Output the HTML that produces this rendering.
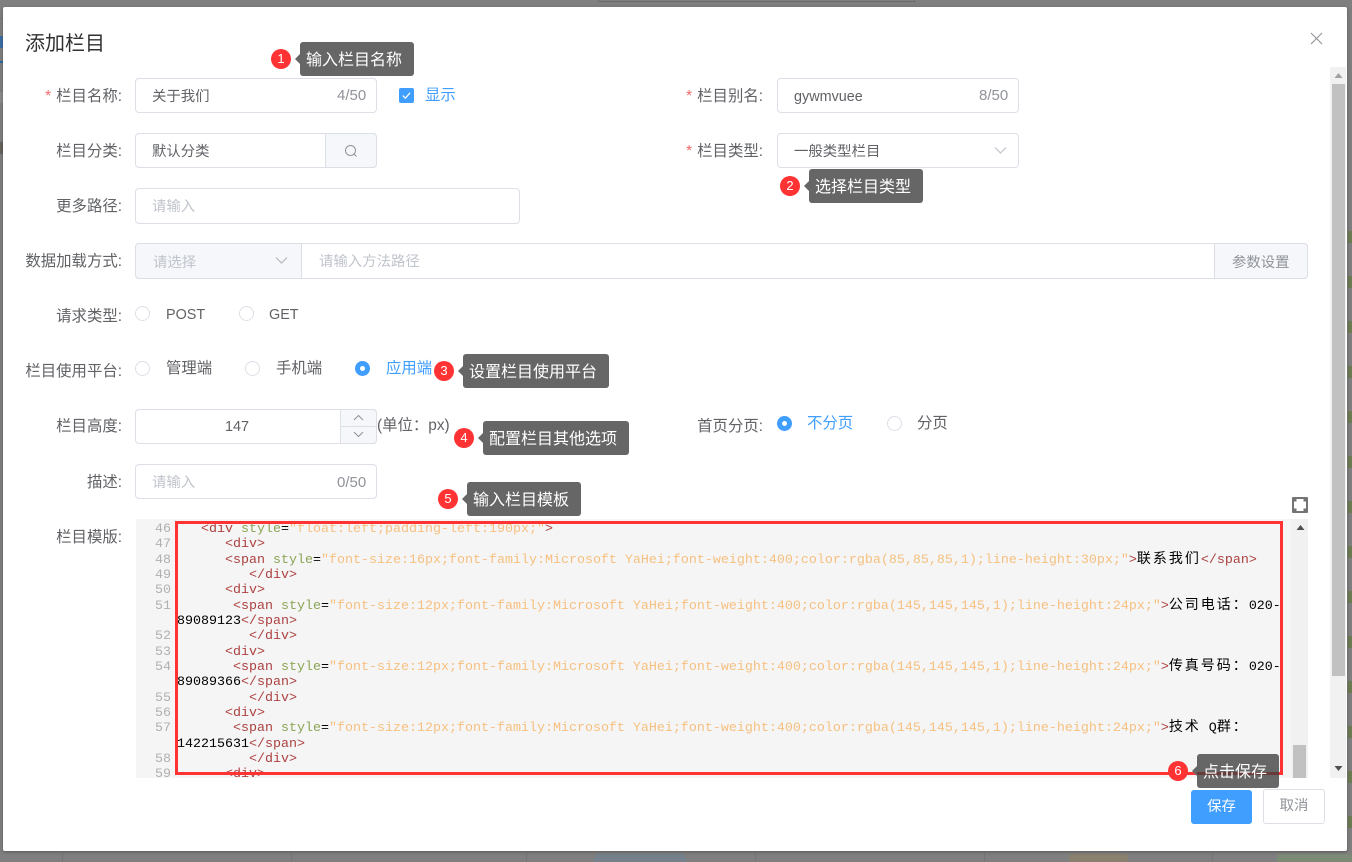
<!DOCTYPE html>
<html lang="zh"><head><meta charset="utf-8"><title>添加栏目</title>
<style>
html,body{margin:0;padding:0}
body{width:1352px;height:862px;overflow:hidden;position:relative;background:#7f7f7f;font-family:"Liberation Sans","Noto Sans CJK SC",sans-serif;font-size:14.4px;color:#606266}
.a{position:absolute;box-sizing:border-box}
.t{position:absolute;white-space:nowrap;line-height:20px;height:20px;margin-top:1px}
.l{text-align:right;width:120px;left:2px;font-size:15.4px}
.w{font-size:15.4px}
.box{position:absolute;box-sizing:border-box;background:#fff;border:1px solid #dcdfe6;border-radius:4px}
.ph{color:#c0c4cc}
.cnt{color:#909399;font-size:15px}
.req{color:#f56c6c;margin-right:5px}
.r{position:absolute;box-sizing:border-box;width:15px;height:15px;border-radius:50%;border:1px solid #dcdfe6;background:#fff}
.r.on{background:#409eff;border-color:#409eff}
.r.on:after{content:"";position:absolute;left:4px;top:4px;width:5px;height:5px;background:#fff;border-radius:50%}
.blue{color:#409eff}
.tip{position:absolute;box-sizing:border-box;height:34px;background:#666;color:#fff;font-size:16px;line-height:37px;border-radius:3px;padding-left:6px;white-space:nowrap}
.tip:before{content:"";position:absolute;left:-5px;top:12px;border:5px solid transparent;border-left:0;border-right-color:#666}
.n{position:absolute;width:20px;height:20px;margin:-10px 0 0 -10px;border-radius:50%;background:#f33;color:#fff;font-size:13px;line-height:20px;text-align:center}
#code{position:absolute;left:136px;top:519px;width:1155px;height:259px;overflow:hidden;background:#f5f5f5}
.ln{position:absolute;left:0;margin-top:1.7px;height:15.35px;line-height:15.35px;white-space:pre;font-family:"Liberation Mono","Noto Sans CJK SC",monospace;font-size:13.33px;color:#000}
.num{color:#b0b0b0;width:35px;text-align:right}
.c{left:41px}
.g{color:#ad4040}.v{color:#8ba556}.s{color:#f6c080}
.z{font-family:"Noto Sans CJK SC",sans-serif;font-size:14px;letter-spacing:2px;line-height:0}
.bgl{position:absolute;background:#757575}
.gr{position:absolute;left:1348px;width:4px;height:12px;background:#6d7b52}
</style></head><body>

<div class="bgl" style="left:0;top:18px;width:3px;height:1px"></div>
<div class="a" style="left:0;top:36px;width:3px;height:12px;background:#3b6ea5"></div>
<div class="a" style="left:0;top:61px;width:3px;height:2px;background:#2b68a8"></div>
<div class="a" style="left:0;top:92px;width:3px;height:11px;background:#8a8a8a"></div>
<div class="a" style="left:0;top:142px;width:3px;height:12px;background:#66625c"></div>
<div class="a" style="left:598px;top:0;width:317px;height:2px;border:1px solid #6c6c6c;border-top:0"></div>
<div class="bgl" style="left:62px;top:852px;width:1px;height:10px"></div>
<div class="bgl" style="left:291px;top:852px;width:1px;height:10px"></div>
<div class="bgl" style="left:526px;top:852px;width:1px;height:10px"></div>
<div class="bgl" style="left:755px;top:852px;width:1px;height:10px"></div>
<div class="bgl" style="left:984px;top:852px;width:1px;height:10px"></div>
<div class="bgl" style="left:1212px;top:852px;width:1px;height:10px"></div>
<div class="a" style="left:594px;top:854px;width:92px;height:8px;background:#75808a;border-radius:3px 3px 0 0"></div>
<div class="a" style="left:1069px;top:854px;width:59px;height:8px;background:#8a8070;border-radius:3px 3px 0 0"></div>
<div class="a" style="left:1277px;top:854px;width:75px;height:8px;background:#7c8a76;border-radius:3px 3px 0 0"></div>
<div class="gr" style="top:231px"></div><div class="gr" style="top:276px"></div><div class="gr" style="top:321px"></div><div class="gr" style="top:366px"></div><div class="gr" style="top:411px"></div><div class="gr" style="top:456px"></div><div class="gr" style="top:501px"></div><div class="gr" style="top:546px"></div><div class="gr" style="top:591px"></div><div class="gr" style="top:636px"></div><div class="gr" style="top:681px"></div><div class="gr" style="top:726px"></div><div class="gr" style="top:771px"></div><div class="gr" style="top:816px"></div>

<!-- modal -->
<div class="a" style="left:3px;top:7px;width:1344px;height:844px;background:#fff;border-radius:2px;box-shadow:0 1px 3px rgba(0,0,0,.3)"></div>
<div class="t" style="left:25px;top:30px;font-size:20px;line-height:26px;height:26px;color:#303133">添加栏目</div>
<svg class="a" style="left:1310px;top:32px" width="13" height="13" viewBox="0 0 13 13"><path d="M1 1L12 12M12 1L1 12" stroke="#909399" stroke-width="1.1" fill="none"/></svg>

<!-- outer scrollbar -->
<div class="a" style="left:1330px;top:67px;width:16px;height:711px;background:#f1f1f1"></div>
<div class="a" style="left:1332px;top:84px;width:13px;height:592px;background:#c1c1c1"></div>
<svg class="a" style="left:1334px;top:73px" width="9" height="6"><path d="M4.5 0L8.5 5H.5Z" fill="#a3a3a3"/></svg>
<svg class="a" style="left:1334px;top:766px" width="9" height="6"><path d="M.5 0H8.5L4.5 5Z" fill="#505050"/></svg>

<!-- row 1 -->
<div class="t l" style="top:86px"><span class="req">*</span>栏目名称:</div>
<div class="box" style="left:135px;top:78px;width:242px;height:35px"></div>
<div class="t" style="left:152px;top:86px">关于我们</div>
<div class="t cnt" style="left:337px;top:85px">4/50</div>
<div class="a" style="left:399px;top:88px;width:15px;height:15px;background:#409eff;border-radius:2px"></div>
<svg class="a" style="left:399px;top:88px" width="15" height="15"><path d="M3.8 7.6L6.4 10.2L11 4.8" stroke="#fff" stroke-width="1.2" fill="none"/></svg>
<div class="t blue w" style="left:425px;top:85px">显示</div>

<div class="t l" style="top:86px;left:643px"><span class="req">*</span>栏目别名:</div>
<div class="box" style="left:777px;top:78px;width:242px;height:35px"></div>
<div class="t" style="left:794px;top:86px">gywmvuee</div>
<div class="t cnt" style="left:979px;top:85px">8/50</div>

<!-- row 2 -->
<div class="t l" style="top:141px">栏目分类:</div>
<div class="box" style="left:135px;top:133px;width:242px;height:35px"></div>
<div class="a" style="left:325px;top:133px;width:52px;height:35px;background:#f5f7fa;border:1px solid #dcdfe6;border-radius:0 4px 4px 0"></div>
<svg class="a" style="left:344px;top:144px" width="14" height="14"><circle cx="6.5" cy="6.5" r="5" stroke="#909399" fill="none"/><path d="M10 10L12.5 12.5" stroke="#909399"/></svg>
<div class="t" style="left:152px;top:141px">默认分类</div>

<div class="t l" style="top:141px;left:643px"><span class="req">*</span>栏目类型:</div>
<div class="box" style="left:777px;top:133px;width:242px;height:35px"></div>
<div class="t" style="left:794px;top:141px">一般类型栏目</div>
<svg class="a" style="left:994px;top:146px" width="13" height="9"><path d="M1 1.5L6.5 7L12 1.5" stroke="#c0c4cc" stroke-width="1.2" fill="none"/></svg>

<!-- row 3 -->
<div class="t l" style="top:196px">更多路径:</div>
<div class="box" style="left:135px;top:188px;width:385px;height:36px"></div>
<div class="t ph" style="left:152px;top:196px">请输入</div>

<!-- row 4 -->
<div class="t l" style="top:251px">数据加载方式:</div>
<div class="box" style="left:135px;top:243px;width:1173px;height:36px"></div>
<div class="a" style="left:135px;top:243px;width:167px;height:36px;background:#f5f7fa;border:1px solid #dcdfe6;border-radius:4px 0 0 4px"></div>
<div class="t ph" style="left:153px;top:252px">请选择</div>
<svg class="a" style="left:275px;top:256px" width="13" height="9"><path d="M1 1.5L6.5 7L12 1.5" stroke="#b4b8bf" stroke-width="1.2" fill="none"/></svg>
<div class="t ph" style="left:319px;top:251px">请输入方法路径</div>
<div class="a" style="left:1214px;top:243px;width:94px;height:36px;background:#f5f7fa;border:1px solid #dcdfe6;border-radius:0 4px 4px 0"></div>
<div class="t" style="left:1232px;top:252px;color:#909399">参数设置</div>

<!-- row 5 -->
<div class="t l" style="top:306px">请求类型:</div>
<div class="r" style="left:135px;top:306px"></div><div class="t" style="left:166px;top:304px">POST</div>
<div class="r" style="left:239px;top:306px"></div><div class="t" style="left:269px;top:304px">GET</div>

<!-- row 6 -->
<div class="t l" style="top:361px">栏目使用平台:</div>
<div class="r" style="left:135px;top:361px"></div><div class="t w" style="left:166px;top:358px">管理端</div>
<div class="r" style="left:245px;top:361px"></div><div class="t w" style="left:276px;top:358px">手机端</div>
<div class="r on" style="left:355px;top:361px"></div><div class="t blue w" style="left:386px;top:358px">应用端</div>

<!-- row 7 -->
<div class="t l" style="top:416px">栏目高度:</div>
<div class="box" style="left:135px;top:409px;width:242px;height:35px"></div>
<div class="a" style="left:340px;top:409px;width:37px;height:18px;background:#f5f7fa;border:1px solid #dcdfe6;border-radius:0 4px 0 0"></div>
<div class="a" style="left:340px;top:426px;width:37px;height:18px;background:#f5f7fa;border:1px solid #dcdfe6;border-radius:0 0 4px 0"></div>
<svg class="a" style="left:353px;top:414px" width="11" height="7"><path d="M1 6L5.5 1.5L10 6" stroke="#909399" fill="none"/></svg>
<svg class="a" style="left:353px;top:431px" width="11" height="7"><path d="M1 1L5.5 5.5L10 1" stroke="#909399" fill="none"/></svg>
<div class="t" style="left:225px;top:416px">147</div>
<div class="t w" style="left:377px;top:415px">(单位：px)</div>
<div class="t l" style="top:416px;left:643px">首页分页:</div>
<div class="r on" style="left:777px;top:416px"></div><div class="t blue w" style="left:807px;top:413px">不分页</div>
<div class="r" style="left:887px;top:416px"></div><div class="t w" style="left:917px;top:413px">分页</div>

<!-- row 8 -->
<div class="t l" style="top:472px">描述:</div>
<div class="box" style="left:135px;top:464px;width:242px;height:35px"></div>
<div class="t ph" style="left:152px;top:472px">请输入</div>
<div class="t cnt" style="left:337px;top:472px">0/50</div>

<!-- row 9 -->
<div class="t l" style="top:527px">栏目模版:</div>
<svg class="a" style="left:1292px;top:497px" width="16" height="16" viewBox="0 0 16 16"><rect width="16" height="16" rx="1" fill="#747474"/><rect x="2" y="2" width="12" height="12" fill="#fff"/><path d="M2 2H4.5V4.5H2ZM11.5 2H14V4.5H11.5ZM2 11.5H4.5V14H2ZM11.5 11.5H14V14H11.5Z" fill="#747474"/></svg>

<div id="code">
<div class="ln num" style="top:1.3px">46</div>
<div class="ln num" style="top:16.6px">47</div>
<div class="ln num" style="top:32px">48</div>
<div class="ln num" style="top:47.3px">49</div>
<div class="ln num" style="top:62.7px">50</div>
<div class="ln num" style="top:78px">51</div>
<div class="ln num" style="top:108.7px">52</div>
<div class="ln num" style="top:124px">53</div>
<div class="ln num" style="top:139.4px">54</div>
<div class="ln num" style="top:170.1px">55</div>
<div class="ln num" style="top:185.4px">56</div>
<div class="ln num" style="top:200.8px">57</div>
<div class="ln num" style="top:231.5px">58</div>
<div class="ln num" style="top:246.8px">59</div>

<div class="ln c" style="top:1.3px">   <span class="g">&lt;div</span> <span class="v">style</span>=<span class="s">"float:left;padding-left:190px;"</span><span class="g">&gt;</span></div>
<div class="ln c" style="top:16.6px">      <span class="g">&lt;div&gt;</span></div>
<div class="ln c" style="top:32px">      <span class="g">&lt;span</span> <span class="v">style</span>=<span class="s">"font-size:16px;font-family:Microsoft YaHei;font-weight:400;color:rgba(85,85,85,1);line-height:30px;"</span><span class="g">&gt;</span><span class="z">联系我们</span><span class="g">&lt;/span&gt;</span></div>
<div class="ln c" style="top:47.3px">         <span class="g">&lt;/div&gt;</span></div>
<div class="ln c" style="top:62.7px">      <span class="g">&lt;div&gt;</span></div>
<div class="ln c" style="top:78px">       <span class="g">&lt;span</span> <span class="v">style</span>=<span class="s">"font-size:12px;font-family:Microsoft YaHei;font-weight:400;color:rgba(145,145,145,1);line-height:24px;"</span><span class="g">&gt;</span><span class="z">公司电话：</span>020-</div>
<div class="ln c" style="top:93.3px">89089123<span class="g">&lt;/span&gt;</span></div>
<div class="ln c" style="top:108.7px">         <span class="g">&lt;/div&gt;</span></div>
<div class="ln c" style="top:124px">      <span class="g">&lt;div&gt;</span></div>
<div class="ln c" style="top:139.4px">       <span class="g">&lt;span</span> <span class="v">style</span>=<span class="s">"font-size:12px;font-family:Microsoft YaHei;font-weight:400;color:rgba(145,145,145,1);line-height:24px;"</span><span class="g">&gt;</span><span class="z">传真号码：</span>020-</div>
<div class="ln c" style="top:154.7px">89089366<span class="g">&lt;/span&gt;</span></div>
<div class="ln c" style="top:170.1px">         <span class="g">&lt;/div&gt;</span></div>
<div class="ln c" style="top:185.4px">      <span class="g">&lt;div&gt;</span></div>
<div class="ln c" style="top:200.8px">       <span class="g">&lt;span</span> <span class="v">style</span>=<span class="s">"font-size:12px;font-family:Microsoft YaHei;font-weight:400;color:rgba(145,145,145,1);line-height:24px;"</span><span class="g">&gt;</span><span class="z">技术</span> Q<span class="z">群：</span></div>
<div class="ln c" style="top:216.1px">142215631<span class="g">&lt;/span&gt;</span></div>
<div class="ln c" style="top:231.5px">         <span class="g">&lt;/div&gt;</span></div>
<div class="ln c" style="top:246.8px">      <span class="g">&lt;div&gt;</span></div>
</div>
<!-- editor scrollbar -->
<div class="a" style="left:1291px;top:519px;width:17px;height:259px;background:#f1f1f1"></div>
<div class="a" style="left:1293px;top:745px;width:13px;height:33px;background:#c1c1c1"></div>
<svg class="a" style="left:1296px;top:525px" width="9" height="6"><path d="M4.5 0L8.5 5H.5Z" fill="#505050"/></svg>

<!-- red highlight -->
<div class="a" style="left:175px;top:521px;width:1108px;height:254px;border:3px solid #f33"></div>

<!-- buttons -->
<div class="a" style="left:1191px;top:790px;width:61px;height:34px;background:#409eff;border-radius:3px;color:#fff;text-align:center;line-height:34px">保存</div>
<div class="a" style="left:1263px;top:789px;width:62px;height:35px;background:#fff;border:1px solid #dcdfe6;border-radius:3px;color:#909399;text-align:center;line-height:33px">取消</div>

<!-- tips -->
<div class="n" style="left:281px;top:59px">1</div><div class="tip" style="left:300px;top:42px;width:114px">输入栏目名称</div>
<div class="n" style="left:790px;top:186px">2</div><div class="tip" style="left:809px;top:169px;width:114px">选择栏目类型</div>
<div class="n" style="left:444px;top:371px">3</div><div class="tip" style="left:463px;top:354px;width:146px">设置栏目使用平台</div>
<div class="n" style="left:464px;top:438px">4</div><div class="tip" style="left:483px;top:421px;width:146px">配置栏目其他选项</div>
<div class="n" style="left:448px;top:499px">5</div><div class="tip" style="left:467px;top:482px;width:114px">输入栏目模板</div>
<div class="n" style="left:1178px;top:771px">6</div><div class="tip" style="left:1197px;top:754px;width:82px;background:rgba(62,62,62,.78)">点击保存</div>
</body></html>
